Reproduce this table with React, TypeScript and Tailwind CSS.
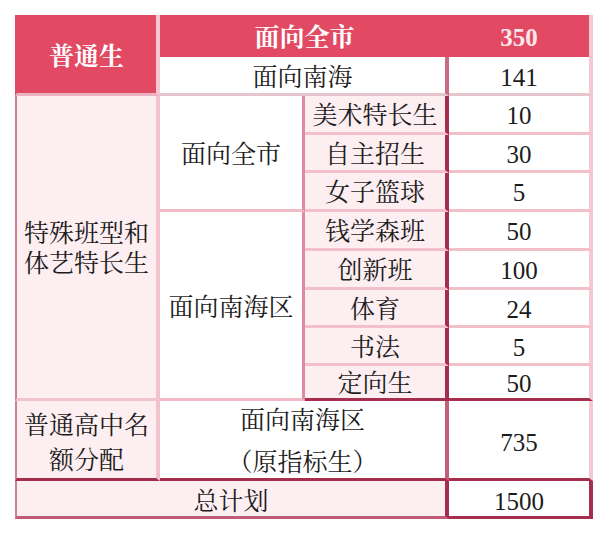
const font = {
  fontFamily: '"Liberation Serif", "Noto Serif CJK SC", "Noto Sans CJK SC", serif',
};

const subRows = [
  { name: "美术特长生", num: "10" },
  { name: "自主招生", num: "30" },
  { name: "女子篮球", num: "5" },
  { name: "钱学森班", num: "50" },
  { name: "创新班", num: "100" },
  { name: "体育", num: "24" },
  { name: "书法", num: "5" },
  { name: "定向生", num: "50" },
];

const rowStart = [
  "row-start-3",
  "row-start-4",
  "row-start-5",
  "row-start-6",
  "row-start-7",
  "row-start-8",
  "row-start-9",
  "row-start-10",
];

export default function App() {
  return (
    <div className="min-h-[536px] w-[608px] bg-white pl-[15px] pt-[15px]" style={font}>
      <div className="grid w-[578px] grid-cols-[145px_145px_144px_144px] grid-rows-[42px_39px_39px_38px_39px_39px_39px_38px_38px_35px_80px_38px] text-[25px] leading-none text-[#1c1c1c]">
        {/* 普通生 */}
        <div className="col-start-1 row-span-2 row-start-1 flex items-center justify-center border-b-[3px] border-l-2 border-r-4 border-b-[#eab3c0] border-l-[#e24a63] border-r-[#f5c9d2] bg-[#e24a63] pt-1 font-bold text-white">
          普通生
        </div>
        <div className="col-span-2 col-start-2 row-start-1 flex items-center justify-center bg-[#e24a63] pt-0.5 font-bold text-white">
          面向全市
        </div>
        <div className="col-start-4 row-start-1 flex items-center justify-center border-r-4 border-r-[#f5c9d2] bg-[#e24a63] pt-0.5 font-bold text-[#fde6ec]">
          350
        </div>
        <div className="col-span-2 col-start-2 row-start-2 flex items-center justify-center border-b-[3px] border-r-4 border-b-[#e6c6cd] border-r-[#c86d84] bg-white pt-1">
          面向南海
        </div>
        <div className="col-start-4 row-start-2 flex items-center justify-center border-b-[3px] border-r-4 border-b-[#e6c6cd] border-r-[#f5c9d2] bg-white pt-1">
          141
        </div>

        {/* 特殊班型和体艺特长生 */}
        <div className="col-start-1 row-span-8 row-start-3 flex flex-col items-center justify-center border-b-[3px] border-l-2 border-r-4 border-b-[#f2c3cd] border-l-[#cc8194] border-r-[#f2c3cd] bg-[#fdeef1] pt-1 leading-[30px]">
          <span>特殊班型和</span>
          <span>体艺特长生</span>
        </div>
        <div className="col-start-2 row-span-3 row-start-3 flex items-center justify-center border-b-[3px] border-r-[3px] border-b-[#f0bac6] border-r-[#e08aa0] bg-white pt-1">
          面向全市
        </div>
        <div className="col-start-2 row-span-5 row-start-6 flex items-center justify-center border-b-[3px] border-r-[3px] border-b-[#f0bac6] border-r-[#e08aa0] bg-white pt-1">
          面向南海区
        </div>
        {subRows.map((r, i) => {
          const last = i === subRows.length - 1;
          return (
            <div key={r.name} className="contents">
              <div
                className={`col-start-3 ${rowStart[i]} flex items-center justify-center border-b-[3px] border-r-4 border-r-[#a52d4e] bg-[#fdeef1] pt-[3px] ${
                  last ? "border-b-[#a52d4e]" : "border-b-[#f2c0ca]"
                }`}
              >
                {r.name}
              </div>
              <div
                className={`col-start-4 ${rowStart[i]} flex items-center justify-center border-b-[3px] border-r-4 border-r-[#f5c9d2] bg-white pt-[3px] ${
                  last ? "border-b-[#a52d4e]" : "border-b-[#f2c0ca]"
                }`}
              >
                {r.num}
              </div>
            </div>
          );
        })}

        {/* 普通高中名额分配 */}
        <div className="col-start-1 row-start-11 flex flex-col items-center justify-center border-b-[3px] border-l-2 border-r-4 border-b-[#a52d4e] border-l-[#cc8194] border-r-[#f2c3cd] bg-[#fdeef1] pt-1.5 leading-[35px]">
          <span>普通高中名</span>
          <span>额分配</span>
        </div>
        <div className="col-span-2 col-start-2 row-start-11 flex flex-col items-center justify-center border-b-[3px] border-r-4 border-b-[#a52d4e] border-r-[#c26079] bg-white pt-1 leading-[42px]">
          <span>面向南海区</span>
          <span>（原指标生）</span>
        </div>
        <div className="col-start-4 row-start-11 flex items-center justify-center border-b-[3px] border-r-4 border-b-[#a52d4e] border-r-[#f5c9d2] bg-white pt-1.5">
          735
        </div>

        {/* 总计划 */}
        <div className="col-span-3 col-start-1 row-start-12 flex items-center justify-center border-b-[3px] border-l-2 border-r-4 border-b-[#c05c76] border-l-[#cc8194] border-r-[#a52d4e] bg-[#fdeef1] pt-1.5">
          总计划
        </div>
        <div className="col-start-4 row-start-12 flex items-center justify-center border-b-[3px] border-r-4 border-b-[#a52d4e] border-r-[#a52d4e] bg-white pt-1.5">
          1500
        </div>
      </div>
    </div>
  );
}
